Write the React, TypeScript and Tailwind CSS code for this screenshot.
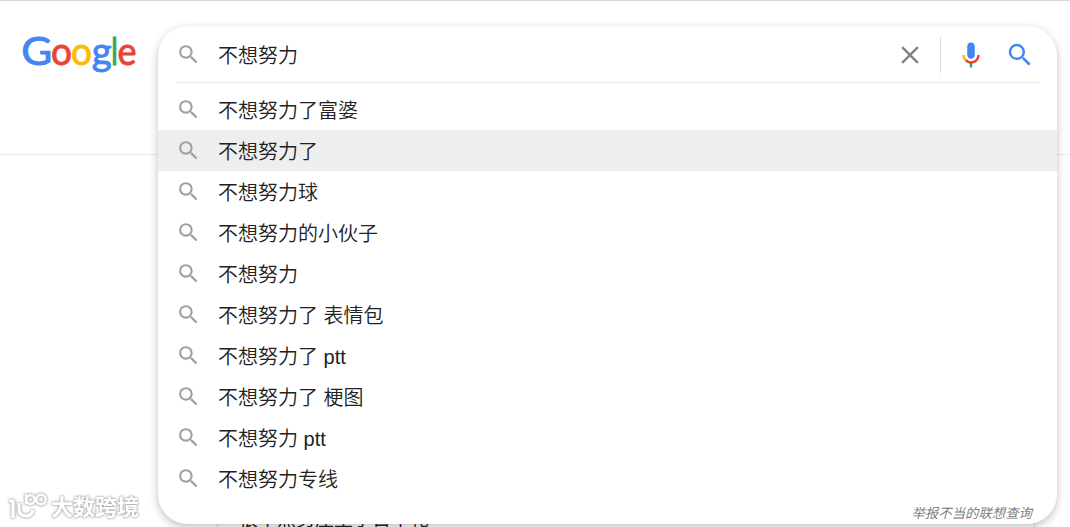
const suggestions = [
  "不想努力了富婆",
  "不想努力了",
  "不想努力球",
  "不想努力的小伙子",
  "不想努力",
  "不想努力了 表情包",
  "不想努力了 ptt",
  "不想努力了 梗图",
  "不想努力 ptt",
  "不想努力专线",
];

const logoLetters = [
  { char: "G", x: 21.3, width: 31, color: "#4285f4" },
  { char: "o", x: 51, width: 21, color: "#ea4335" },
  { char: "o", x: 71, width: 21, color: "#fbbc05" },
  { char: "g", x: 91.8, width: 20, color: "#4285f4" },
  { char: "l", x: 111, width: 7, color: "#34a853" },
  { char: "e", x: 117.5, width: 19, color: "#ea4335" },
];

function SearchIcon({ className }: { className: string }) {
  return (
    <svg viewBox="0 0 24 24" fill="currentColor" className={className}>
      <path d="M15.5 14h-.79l-.28-.27A6.471 6.471 0 0 0 16 9.5 6.5 6.5 0 1 0 9.5 16c1.61 0 3.09-.59 4.23-1.57l.27.28v.79l5 4.99L20.49 19l-4.99-5zm-6 0C7.01 14 5 11.99 5 9.5S7.01 5 9.5 5 14 7.01 14 9.5 11.99 14 9.5 14z" />
    </svg>
  );
}

function MicIcon() {
  return (
    <svg viewBox="0 0 24 24" className="size-[30px]">
      <path fill="#4285f4" d="m12 15c1.66 0 3-1.31 3-2.97v-7.02c0-1.66-1.34-3.01-3-3.01s-3 1.34-3 3.01v7.02c0 1.66 1.34 2.97 3 2.97z" />
      <path fill="#34a853" d="m11 18.08h2v3.92h-2z" />
      <path fill="#fbbc05" d="m7.05 16.87c-1.27-1.33-2.05-2.83-2.05-4.87h2c0 1.45 0.56 2.42 1.47 3.38v0.32l-1.15 1.18z" />
      <path fill="#ea4335" d="m12 16.93a4.97 5.25 0 0 1 -3.54 -1.55l-1.41 1.49c1.26 1.34 3.02 2.13 4.95 2.13 3.87 0 6.99-2.92 6.99-7h-1.99c0 2.92-2.24 4.93-5.01 4.93z" />
    </svg>
  );
}

function Logo() {
  return (
    <svg viewBox="0 0 158 80" className="h-20 w-[158px] font-['Lato']" fontSize="38.5">
      {logoLetters.map((l, i) => (
        <text
          key={i}
          x={l.x}
          y="65.3"
          fill={l.color}
          stroke={l.color}
          strokeWidth="0.9"
          textLength={l.width}
          lengthAdjust="spacingAndGlyphs"
        >
          {l.char}
        </text>
      ))}
    </svg>
  );
}

function Watermark() {
  return (
    <div className="absolute bottom-[3px] left-[8px] flex h-8 items-center gap-[3px] text-white [filter:drop-shadow(0_0_1px_#aaa)_drop-shadow(0_0_1px_#bbb)]">
      <svg viewBox="0 0 40 30" className="h-[30px] w-10" fill="none" stroke="currentColor" strokeWidth="3.2">
        <path d="M1 8h4v17" />
        <path d="M11 10v6c0 5 3 7 7 7s6-2 7-6" />
        <path d="M18 1v10" strokeWidth="2.4" />
        <circle cx="22.5" cy="6.5" r="4.3" strokeWidth="2.4" />
        <circle cx="33" cy="6.5" r="4.8" strokeWidth="2.4" />
      </svg>
      <span className="text-[22px] leading-8 font-bold">大数跨境</span>
    </div>
  );
}

function Row({ text, active }: { text: string; active: boolean }) {
  return (
    <li className={`flex h-[41px] items-center pl-[18px] ${active ? "bg-[#eee]" : ""}`}>
      <SearchIcon className="mr-[17px] size-[25px] text-[#9aa0a6]" />
      <span className="pt-0.5">{text}</span>
    </li>
  );
}

export default function App() {
  return (
    <div className="relative h-[527px] w-[1070px] overflow-hidden bg-white font-['Liberation_Sans','Noto_Sans_CJK_SC',sans-serif] text-[#212121]">
      {/* Header */}
      <header className="h-[155px] border-t border-b border-t-[#d8d8d8] border-b-[#e8eaed]">
        <div className="-mt-px">
          <Logo />
        </div>
      </header>

      {/* Result card peeking out below the dropdown */}
      <div className="mt-[345px] ml-[217px] h-[27px] w-[818px] border-x border-[#dadce0] pl-[21px] text-[19px] leading-[40px] whitespace-nowrap">
        很不然努庄至了日不礼
      </div>

      {/* Search box with suggestions */}
      <div className="absolute top-[26px] left-[158px] flex h-[498px] w-[899px] flex-col overflow-hidden rounded-[30px] bg-white text-xl font-[350] shadow-[0_3px_8px_rgba(32,33,36,0.28)]">
        <div className="flex h-14 shrink-0 items-center pl-[18px]">
          <SearchIcon className="mr-[17px] size-[25px] text-[#9aa0a6]" />
          <span className="grow pt-[3px]">不想努力</span>
          <div className="flex items-center pt-px">
            <svg viewBox="0 0 24 24" fill="#80868b" className="mr-[15px] size-[30px]">
              <path d="M19 6.41L17.59 5 12 10.59 6.41 5 5 6.41 10.59 12 5 17.59 6.41 19 12 13.41 17.59 19 19 17.59 13.41 12z" />
            </svg>
            <div className="mr-[15px] h-9 w-px bg-[#dadce0]" />
            <MicIcon />
            <SearchIcon className="mr-[22px] ml-[19px] size-[30px] text-[#4285f4]" />
          </div>
        </div>
        <div className="mr-[17px] mb-[6px] ml-[18px] h-px shrink-0 bg-[#e8eaed]" />
        <ul className="shrink-0">
          {suggestions.map((text, i) => (
            <Row key={text} text={text} active={i === 1} />
          ))}
        </ul>
        <p className="mr-[25px] shrink-0 pt-[3px] text-right text-[13.4px] leading-6 text-[#70757a] italic">
          举报不当的联想查询
        </p>
      </div>

      <Watermark />
    </div>
  );
}
